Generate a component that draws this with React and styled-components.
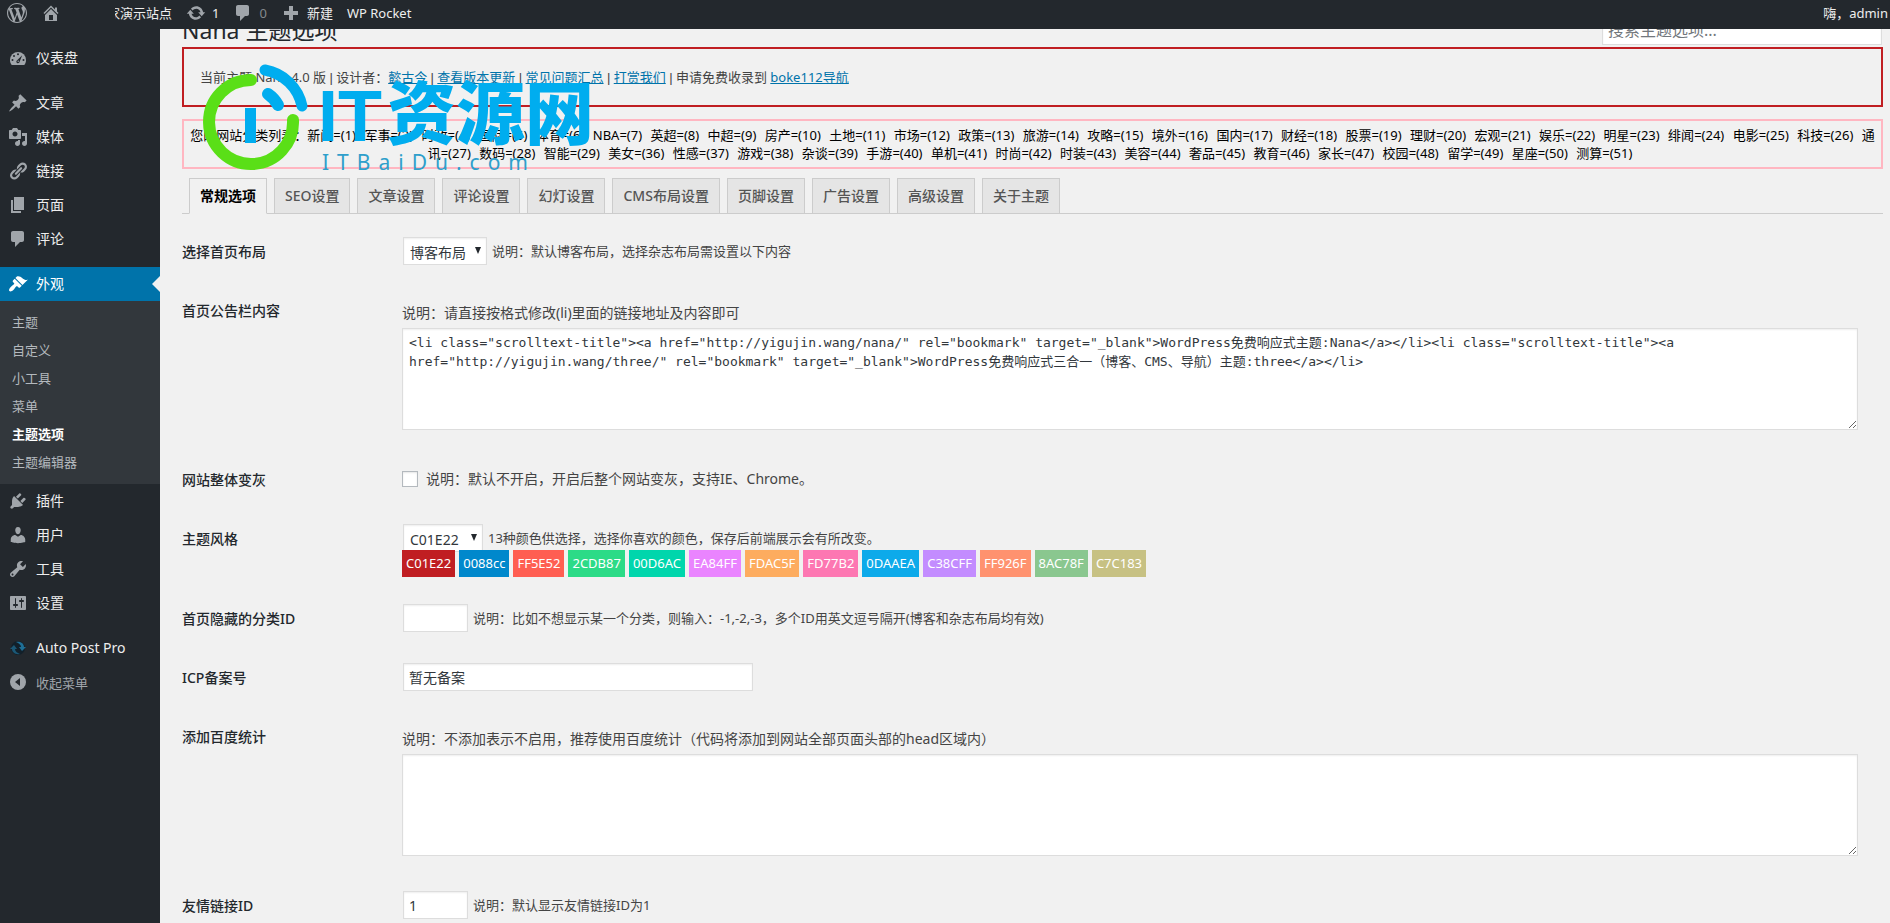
import React from "react";
import styled, { createGlobalStyle } from "styled-components";

const GlobalStyle = createGlobalStyle`
  * {
    box-sizing: border-box;
  }
  body {
    margin: 0;
    background: #f1f1f1;
    color: #444;
    font-family: "Noto Sans", "Noto Sans CJK SC", sans-serif;
    font-size: 13px;
    line-height: 18px;
  }
  input, select, textarea, button {
    font-family: inherit;
    margin: 0;
  }
`;

const Page = styled.div`
  position: relative;
  height: 100vh;
  overflow: hidden;
`;

/* ---------- admin bar ---------- */

const AdminBar = styled.header`
  position: absolute;
  top: 0;
  left: 0;
  right: 0;
  z-index: 10;
  display: flex;
  align-items: center;
  height: 29px;
  padding: 0 2px 4px 7px;
  background: #23282d;
`;

const BarLink = styled.a`
  display: flex;
  align-items: center;
  gap: 6px;
  margin-right: ${(props) => props.$gap || 14}px;
  color: ${(props) => (props.$dim ? "#84888c" : "#eee")};
  text-decoration: none;
  white-space: nowrap;
`;

const SiteName = styled(BarLink)`
  justify-content: flex-end;
  width: 57px;
  overflow: hidden;
`;

const Account = styled(BarLink)`
  margin-left: auto;
  margin-right: 0;
`;

/* ---------- side menu ---------- */

const Layout = styled.div`
  display: flex;
  min-height: 100vh;
`;

const Sidebar = styled.nav`
  flex: none;
  width: 160px;
  padding-top: 41px;
  background: #23282d;
`;

const MenuGroup = styled.div`
  margin-bottom: 11px;
`;

const MenuLink = styled.a`
  position: relative;
  display: flex;
  align-items: center;
  height: 34px;
  padding-left: 8px;
  gap: 8px;
  font-size: 14px;
  color: ${(props) => (props.$active ? "#fff" : "#eee")};
  background: ${(props) => (props.$active ? "#0073aa" : "transparent")};
  text-decoration: none;

  &::after {
    content: "";
    display: ${(props) => (props.$active ? "block" : "none")};
    position: absolute;
    right: 0;
    top: 9px;
    border: 8px solid transparent;
    border-left-width: 0;
    border-right-color: #f1f1f1;
  }
`;

const CollapseButton = styled.button`
  display: flex;
  align-items: center;
  gap: 8px;
  width: 100%;
  height: 34px;
  padding: 0 0 0 8px;
  border: 0;
  background: none;
  color: #a0a5aa;
  font-size: 13px;
`;

const SubMenu = styled.div`
  padding: 7px 0 8px;
  background: #32373c;
`;

const SubLink = styled.a`
  display: block;
  padding: 5px 12px;
  color: ${(props) => (props.$current ? "#fff" : "#b4b9be")};
  font-weight: ${(props) => (props.$current ? 600 : 400)};
  text-decoration: none;
`;

const Icon = styled.svg`
  flex: none;
  width: 20px;
  height: 20px;
  fill: ${(props) => (props.$active ? "#fff" : "#a0a5aa")};
`;

/* ---------- content ---------- */

const Main = styled.main`
  flex: 1;
  min-width: 0;
  padding: 15px 7px 0 22px;
`;

const TitleRow = styled.div`
  display: flex;
  justify-content: space-between;
  height: 32px;
`;

const Title = styled.h1`
  margin: 0;
  color: #23282d;
  font-size: 23px;
  font-weight: 400;
  line-height: 30px;
`;

const fieldBox = `
  border: 1px solid #ddd;
  background: #fff;
  color: #32373c;
  box-shadow: inset 0 1px 2px rgba(0, 0, 0, 0.07);
  outline: none;
`;

const SearchInput = styled.input`
  ${fieldBox}
  width: 280px;
  height: 30px;
  margin-right: 1px;
  padding: 3px 5px;
  font-size: 16px;

  &::placeholder {
    color: #72777c;
  }
`;

const ThemeInfo = styled.div`
  padding: 19px 16px 18px;
  border: 2px solid #c01e22;

  a {
    color: #0073aa;
  }
`;

const Divider = styled.span`
  font-family: "Liberation Sans", sans-serif;
`;

const CategoryList = styled.div`
  margin: 12px 0 9px;
  padding: 5px 4px;
  border: 2px solid #ffb6c1;
  color: #000;
  text-align: center;
`;

const Category = styled.span`
  margin-right: 5px;
`;

const Tabs = styled.div`
  display: flex;
  gap: 7px;
  padding-left: 7px;
  border-bottom: 1px solid #ccc;
`;

const Tab = styled.button`
  height: 36px;
  margin-bottom: -1px;
  padding: 0 10px;
  border: 1px solid #ccc;
  border-bottom-color: ${(props) => (props.$active ? "#f1f1f1" : "#ccc")};
  background: ${(props) => (props.$active ? "#f1f1f1" : "#e5e5e5")};
  color: ${(props) => (props.$active ? "#000" : "#555")};
  font-size: 14px;
  font-weight: ${(props) => (props.$active ? 600 : 500)};
  line-height: 24px;
`;

const Form = styled.form`
  padding-top: 9px;
`;

const Row = styled.div`
  display: grid;
  grid-template-columns: 220px 1fr;
`;

const RowLabel = styled.label`
  padding-top: 20px;
  color: #23282d;
  font-size: 14px;
  font-weight: 500;
`;

const Field = styled.div`
  padding: 14px 10px 17px 0;
`;

const Line = styled.div`
  display: flex;
  align-items: center;
  gap: 5px;
  min-height: 28px;
  padding-left: ${(props) => (props.$flush ? 0 : 1)}px;
`;

const CheckLabel = styled.label`
  padding-left: 3px;
  font-size: 14px;
`;

const Description = styled.p`
  margin: 0;
  padding: 7px 0 5px;
  font-size: 14px;
  line-height: 20px;
`;

const TextInput = styled.input`
  ${fieldBox}
  width: ${(props) => (props.$wide ? 350 : 65)}px;
  height: 28px;
  padding: 3px 5px;
  font-size: 14px;
`;

const TextArea = styled.textarea`
  ${fieldBox}
  display: block;
  width: 99%;
  height: 102px;
  margin-bottom: 4px;
  padding: 4px 6px;
  font-family: "DejaVu Sans Mono", "Noto Sans CJK SC", monospace;
  font-size: 13px;
  line-height: 19px;
`;

const Checkbox = styled.input`
  appearance: none;
  width: 16px;
  height: 16px;
  border: 1px solid #b4b9be;
  background: #fff;
  box-shadow: inset 0 1px 2px rgba(0, 0, 0, 0.1);
`;

const SelectWrap = styled.span`
  position: relative;
  display: inline-flex;
  width: ${(props) => (props.$small ? 80 : 84)}px;
`;

const Select = styled.select`
  ${fieldBox}
  appearance: none;
  width: 100%;
  height: 28px;
  padding: 3px 18px 1px 6px;
  font-size: 14px;
`;

const Arrow = styled.svg`
  position: absolute;
  right: 6px;
  top: 10px;
  width: 6px;
  height: 7px;
  fill: #23282d;
  pointer-events: none;
`;

const Swatches = styled.div`
  position: relative;
  display: flex;
  flex-wrap: wrap;
  gap: 4px;
  margin: -2px 0 -4px;
`;

const Swatch = styled.span`
  padding: 4px 4px 5px;
  background: ${(props) => props.$color};
  color: #fff;
`;

const Watermark = styled.svg`
  position: absolute;
  left: 200px;
  top: 60px;
  z-index: 5;
  width: 400px;
  height: 116px;
  pointer-events: none;
`;

const paths = {
  wordpress:
    "M20 10c0-5.51-4.49-10-10-10C4.48 0 0 4.49 0 10c0 5.52 4.48 10 10 10 5.51 0 10-4.48 10-10zM7.78 15.37L4.37 6.22c.55-.02 1.17-.08 1.17-.08.5-.06.44-1.13-.06-1.11 0 0-1.45.11-2.37.11-.18 0-.37 0-.58-.01C4.12 2.69 6.87 1.11 10 1.11c2.33 0 4.45.87 6.05 2.34-.68-.11-1.65.39-1.65 1.58 0 .74.45 1.36.9 2.1.35.61.55 1.36.55 2.46 0 1.49-1.4 5-1.4 5l-3.03-8.37c.54-.02.82-.17.82-.17.5-.05.44-1.25-.06-1.22 0 0-1.44.12-2.38.12-.87 0-2.33-.12-2.33-.12-.5-.03-.56 1.2-.06 1.22l.92.08 1.26 3.41zM17.41 10c.24-.64.74-1.87.43-4.25.7 1.29 1.05 2.71 1.05 4.25 0 3.29-1.73 6.24-4.4 7.78.97-2.59 1.94-5.2 2.92-7.78zM6.1 18.09C3.12 16.65 1.11 13.53 1.11 10c0-1.3.23-2.48.72-3.59C3.25 10.3 4.67 14.2 6.1 18.09zm4.03-6.63l2.58 6.98c-.86.29-1.76.45-2.71.45-.79 0-1.57-.11-2.29-.33.81-2.38 1.62-4.74 2.42-7.1z",
  home:
    "M16 8.5l1.53 1.53-1.06 1.06L10 4.6l-6.47 6.49-1.06-1.06L10 2.5l4 4v-2h2v4zm-6-2.46l6 5.99V18H4v-5.97zM12 17v-5H8v5h4z",
  update:
    "M10.2 3.28c3.53 0 6.43 2.61 6.92 6h2.08l-3.5 4-3.5-4h2.32c-.45-1.97-2.21-3.45-4.32-3.45-1.45 0-2.73.71-3.54 1.78L4.95 5.66C6.23 4.2 8.11 3.28 10.2 3.28zm-.4 13.44c-3.52 0-6.43-2.61-6.92-6H.8l3.5-4c1.17 1.33 2.33 2.67 3.5 4H5.48c.45 1.97 2.21 3.45 4.32 3.45 1.45 0 2.73-.71 3.54-1.78l1.71 1.95c-1.28 1.46-3.15 2.38-5.25 2.38z",
  comments:
    "M5 2h9c1.1 0 2 .9 2 2v7c0 1.1-.9 2-2 2h-2l-5 5v-5H5c-1.1 0-2-.9-2-2V4c0-1.1.9-2 2-2z",
  plus: "M17 8v4h-5v5H8v-5H3V8h5V3h4v5h5z",
  post:
    "M10.44 3.02l1.82-1.82 6.36 6.35-1.83 1.82c-1.05-.68-2.48-.57-3.41.36l-.75.75c-.92.93-1.04 2.35-.35 3.41l-1.83 1.82-2.41-2.41-2.8 2.79c-.42.42-3.38 2.71-3.8 2.29s1.86-3.39 2.28-3.81l2.79-2.79L4.1 9.36l1.83-1.82c1.05.69 2.48.57 3.4-.36l.75-.75c.93-.92 1.05-2.35.36-3.41z",
  media:
    "M13 11V4c0-.55-.45-1-1-1h-1.67L9 1H5L3.67 3H2c-.55 0-1 .45-1 1v7c0 .55.45 1 1 1h10c.55 0 1-.45 1-1zM7 4.5c1.38 0 2.5 1.12 2.5 2.5S8.38 9.5 7 9.5 4.5 8.38 4.5 7 5.62 4.5 7 4.5zM14 6h5v10.5c0 1.38-1.12 2.5-2.5 2.5S14 17.88 14 16.5s1.12-2.5 2.5-2.5c.17 0 .34.02.5.05V9h-3V6zm-4 8.05V13h2v3.5c0 1.38-1.12 2.5-2.5 2.5S7 17.88 7 16.5 8.12 14 9.5 14c.17 0 .34.02.5.05z",
  links:
    "M17.74 2.76c1.68 1.69 1.68 4.41 0 6.1l-1.53 1.52c-1.12 1.12-2.7 1.47-4.14 1.09l2.62-2.61.76-.77.76-.76c.84-.84.84-2.2 0-3.04-.84-.85-2.2-.85-3.04 0l-.77.76-3.38 3.38c-.37-1.44-.02-3.02 1.1-4.14l1.52-1.53c1.69-1.68 4.42-1.68 6.1 0zM8.59 13.43l5.34-5.34c.42-.42.42-1.1 0-1.52-.44-.43-1.13-.39-1.53 0l-5.33 5.34c-.42.42-.42 1.1 0 1.52.44.43 1.13.39 1.52 0zm-.76 2.29l4.14-4.15c.38 1.44.03 3.02-1.09 4.14l-1.52 1.53c-1.69 1.68-4.41 1.68-6.1 0-1.68-1.68-1.68-4.42 0-6.1l1.53-1.52c1.12-1.12 2.7-1.47 4.14-1.1l-4.14 4.15c-.85.84-.85 2.2 0 3.05.84.84 2.2.84 3.04 0z",
  page: "M6 15V2h10v13H6zm-1 1h8v2H3V5h2v11z",
  appearance:
    "M14.48 11.06L7.41 3.99l1.5-1.5c.5-.56 2.3-.47 3.51.32 1.21.8 1.43 1.28 2.91 2.1 1.18.64 2.45 1.26 4.45.85zm-.71.71L6.7 4.7 4.93 6.47c-.39.39-.39 1.02 0 1.41l1.06 1.06c.39.39.39 1.03 0 1.42-.6.6-1.43 1.11-2.21 1.69-.35.26-.7.53-1.01.84C1.43 14.23.4 16.08 1.4 17.07c.99 1 2.84-.03 4.18-1.36.31-.31.58-.66.85-1.02.57-.78 1.08-1.61 1.69-2.21.39-.39 1.02-.39 1.41 0l1.06 1.06c.39.39 1.02.39 1.41 0z",
  plugins:
    "M13.11 4.36L9.87 7.6 8 5.73l3.24-3.24c.35-.34 1.05-.2 1.56.32.52.51.66 1.21.31 1.55zm-8 1.77l.91-1.12 9.01 9.01-1.19.84c-.71.71-2.63 1.16-3.82 1.16H6.14L4.9 17.26c-.59.59-1.54.59-2.12 0-.59-.58-.59-1.53 0-2.12l1.24-1.24v-3.88c0-1.13.4-3.19 1.09-3.89zm7.26 3.97l3.24-3.24c.34-.35 1.04-.21 1.55.31.52.51.66 1.21.31 1.55l-3.24 3.25z",
  users:
    "M10 9.25c-2.27 0-2.73-3.44-2.73-3.44C7 4.02 7.82 2 9.97 2c2.16 0 2.98 2.02 2.71 3.81 0 0-.41 3.44-2.68 3.44zm0 2.57L12.72 10c2.39 0 4.52 2.33 4.52 4.53v2.49s-3.65 1.13-7.24 1.13c-3.65 0-7.24-1.13-7.24-1.13v-2.49c0-2.25 1.94-4.48 4.47-4.48z",
  tools:
    "M16.68 9.77c-1.34 1.34-3.3 1.67-4.95.99l-5.41 6.52c-.99.99-2.59.99-3.58 0s-.99-2.59 0-3.57l6.52-5.42c-.68-1.65-.35-3.61.99-4.95 1.28-1.28 3.12-1.62 4.72-1.06l-2.89 2.89 2.82 2.82 2.86-2.87c.53 1.58.18 3.39-1.08 4.65zM3.81 16.21c.4.39 1.04.39 1.43 0 .4-.4.4-1.04 0-1.43-.39-.4-1.03-.4-1.43 0-.39.39-.39 1.03 0 1.43z",
  settings:
    "M18 16V4c0-.55-.45-1-1-1H3c-.55 0-1 .45-1 1v12c0 .55.45 1 1 1h14c.55 0 1-.45 1-1zM8 11h1c.55 0 1 .45 1 1s-.45 1-1 1H8v1.5c0 .28-.22.5-.5.5s-.5-.22-.5-.5V13H6c-.55 0-1-.45-1-1s.45-1 1-1h1V5.5c0-.28.22-.5.5-.5s.5.22.5.5V11zm5-2h-1c-.55 0-1-.45-1-1s.45-1 1-1h1V5.5c0-.28.22-.5.5-.5s.5.22.5.5V7h1c.55 0 1 .45 1 1s-.45 1-1 1h-1v5.5c0 .28-.22.5-.5.5s-.5-.22-.5-.5V9z",
};

const WpIcon = ({ name, active }) => (
  <Icon viewBox="0 0 20 20" $active={active} aria-hidden="true">
    <path fillRule="evenodd" d={paths[name]} />
  </Icon>
);

const DashboardIcon = () => (
  <Icon viewBox="0 0 20 20" aria-hidden="true">
    <path d="M3.76 17h12.48C17.34 15.63 18 13.89 18 12a8 8 0 0 0-16 0c0 1.89.66 3.63 1.76 5z" />
    <g fill="#23282d">
      <circle cx="10" cy="6.2" r="1" />
      <circle cx="6" cy="8" r="1" />
      <circle cx="4.5" cy="12" r="1" />
      <circle cx="15.5" cy="12" r="1" />
      <path d="M14.2 7.2l-2.7 6.7a1.6 1.6 0 1 1-2.6-1.5z" />
    </g>
    <circle cx="10.2" cy="13.2" r="0.7" />
  </Icon>
);

const AutoPostIcon = () => (
  <Icon viewBox="0 0 20 20" aria-hidden="true">
    <circle cx="10" cy="10" r="7" fill="#12202a" />
    <path d="M2 11l4-4 3 4H7c0 2 2 4 5 5-5 1-8-2-8-5z" fill="#1b5876" />
    <path d="M18 9l-4 4-3-4h2c0-2-2-4-5-5 5-1 8 2 8 5z" fill="#1f6f96" />
  </Icon>
);

const CollapseIcon = () => (
  <Icon viewBox="0 0 20 20" aria-hidden="true">
    <circle cx="10" cy="10" r="8" />
    <path d="M12 6v8l-5-4z" fill="#23282d" />
  </Icon>
);

const menuTop = [
  ["post", "文章"],
  ["media", "媒体"],
  ["links", "链接"],
  ["page", "页面"],
  ["comments", "评论"],
];

const subMenu = ["主题", "自定义", "小工具", "菜单", "主题选项", "主题编辑器"];

const menuBottom = [
  ["plugins", "插件"],
  ["users", "用户"],
  ["tools", "工具"],
  ["settings", "设置"],
];

const infoLinks = ["懿古今", "查看版本更新", "常见问题汇总", "打赏我们"];

const categories = [
  ["新闻", 1], ["军事", 3], ["时政", 4], ["国际", 5], ["体育", 6], ["NBA", 7],
  ["英超", 8], ["中超", 9], ["房产", 10], ["土地", 11], ["市场", 12], ["政策", 13],
  ["旅游", 14], ["攻略", 15], ["境外", 16], ["国内", 17], ["财经", 18], ["股票", 19],
  ["理财", 20], ["宏观", 21], ["娱乐", 22], ["明星", 23], ["绯闻", 24], ["电影", 25],
  ["科技", 26], ["通讯", 27], ["数码", 28], ["智能", 29], ["美女", 36], ["性感", 37],
  ["游戏", 38], ["杂谈", 39], ["手游", 40], ["单机", 41], ["时尚", 42], ["时装", 43],
  ["美容", 44], ["奢品", 45], ["教育", 46], ["家长", 47], ["校园", 48], ["留学", 49],
  ["星座", 50], ["测算", 51],
];

const tabs = [
  "常规选项", "SEO设置", "文章设置", "评论设置", "幻灯设置",
  "CMS布局设置", "页脚设置", "广告设置", "高级设置", "关于主题",
];

const colors = [
  "C01E22", "0088cc", "FF5E52", "2CDB87", "00D6AC", "EA84FF", "FDAC5F",
  "FD77B2", "0DAAEA", "C38CFF", "FF926F", "8AC78F", "C7C183",
];

const notice =
  '<li class="scrolltext-title"><a href="http://yigujin.wang/nana/" rel="bookmark" target="_blank">WordPress免费响应式主题:Nana</a></li><li class="scrolltext-title"><a href="http://yigujin.wang/three/" rel="bookmark" target="_blank">WordPress免费响应式三合一（博客、CMS、导航）主题:three</a></li>';

const MenuItem = ({ icon, label, active }) => (
  <MenuLink href="#" $active={active}>
    {typeof icon === "string" ? <WpIcon name={icon} active={active} /> : icon}
    {label}
  </MenuLink>
);

const Dropdown = ({ id, small, options }) => (
  <SelectWrap $small={small}>
    <Select id={id}>
      {options.map((option) => (
        <option key={option}>{option}</option>
      ))}
    </Select>
    <Arrow viewBox="0 0 6 7" aria-hidden="true">
      <path d="M0 0h6L3 7z" />
    </Arrow>
  </SelectWrap>
);

const OptionRow = ({ id, label, children }) => (
  <Row>
    <RowLabel htmlFor={id}>{label}</RowLabel>
    <Field>{children}</Field>
  </Row>
);

const SiteWatermark = () => (
  <Watermark viewBox="0 0 400 116">
    <g fill="none" strokeLinecap="round">
      <path d="M51 20A42 42 0 1 0 93 60" stroke="#5adf17" strokeWidth="12" />
      <path d="M65 10A46 46 0 0 1 102 46" stroke="#00adef" strokeWidth="11" />
      <path d="M68 34Q74 38 78 45" stroke="#00adef" strokeWidth="12" />
    </g>
    <path d="M45 48h11v35H45z" fill="#00adef" />
    <g fill="#00adef" fontWeight="900">
      <text x="118" y="81" fontSize="72" fontFamily="'Liberation Sans', sans-serif">
        IT
      </text>
      <text x="187" y="79" fontSize="69" fontFamily="'Noto Sans CJK SC', sans-serif">
        资源网
      </text>
    </g>
    <text
      x="122"
      y="110"
      fill="#2f9fcb"
      fontFamily="'Noto Sans', sans-serif"
      fontSize="21"
      letterSpacing="8"
    >
      ITBaiDu.com
    </text>
  </Watermark>
);

export default function App() {
  return (
    <>
      <GlobalStyle />
      <Page>
        <AdminBar>
          <BarLink href="#" aria-label="WordPress">
            <WpIcon name="wordpress" />
          </BarLink>
          <BarLink href="#" aria-label="首页" $gap={54}>
            <WpIcon name="home" />
          </BarLink>
          <SiteName href="#">家演示站点</SiteName>
          <BarLink href="#">
            <WpIcon name="update" />1
          </BarLink>
          <BarLink href="#" $dim>
            <WpIcon name="comments" />0
          </BarLink>
          <BarLink href="#">
            <WpIcon name="plus" />
            新建
          </BarLink>
          <BarLink href="#">WP Rocket</BarLink>
          <Account href="#">嗨，admin</Account>
        </AdminBar>

        <Layout>
          <Sidebar>
            <MenuGroup>
              <MenuItem icon={<DashboardIcon />} label="仪表盘" />
            </MenuGroup>
            <MenuGroup>
              {menuTop.map(([icon, label]) => (
                <MenuItem key={label} icon={icon} label={label} />
              ))}
            </MenuGroup>
            <MenuGroup>
              <MenuItem icon="appearance" label="外观" active />
              <SubMenu>
                {subMenu.map((label) => (
                  <SubLink key={label} href="#" $current={label === "主题选项"}>
                    {label}
                  </SubLink>
                ))}
              </SubMenu>
              {menuBottom.map(([icon, label]) => (
                <MenuItem key={label} icon={icon} label={label} />
              ))}
            </MenuGroup>
            <MenuItem icon={<AutoPostIcon />} label="Auto Post Pro" />
            <CollapseButton type="button">
              <CollapseIcon />
              收起菜单
            </CollapseButton>
          </Sidebar>

          <Main>
            <TitleRow>
              <Title>Nana 主题选项</Title>
              <SearchInput type="search" placeholder="搜索主题选项..." aria-label="搜索主题选项" />
            </TitleRow>

            <ThemeInfo>
              当前主题 Nana 4.0 版 <Divider>|</Divider> 设计者：
              {infoLinks.map((label) => (
                <React.Fragment key={label}>
                  <a href="#">{label}</a> <Divider>|</Divider>{" "}
                </React.Fragment>
              ))}
              申请免费收录到 <a href="#">boke112导航</a>
            </ThemeInfo>

            <CategoryList>
              您的网站分类列表：
              {categories.map(([name, id]) => (
                <React.Fragment key={id}>
                  <Category>
                    {name}=({id})
                  </Category>{" "}
                </React.Fragment>
              ))}
            </CategoryList>

            <Tabs>
              {tabs.map((label, i) => (
                <Tab key={label} type="button" $active={i === 0}>
                  {label}
                </Tab>
              ))}
            </Tabs>

            <Form>
              <OptionRow id="layout" label="选择首页布局">
                <Line>
                  <Dropdown id="layout" options={["博客布局", "杂志布局"]} />
                  <span>说明：默认博客布局，选择杂志布局需设置以下内容</span>
                </Line>
              </OptionRow>
              <OptionRow id="notice" label="首页公告栏内容">
                <Description>说明：请直接按格式修改(li)里面的链接地址及内容即可</Description>
                <TextArea id="notice" defaultValue={notice} spellCheck={false} />
              </OptionRow>
              <OptionRow id="gray" label="网站整体变灰">
                <Line $flush>
                  <Checkbox id="gray" type="checkbox" />
                  <CheckLabel htmlFor="gray">
                    说明：默认不开启，开启后整个网站变灰，支持IE、Chrome。
                  </CheckLabel>
                </Line>
              </OptionRow>
              <OptionRow id="color" label="主题风格">
                <Line>
                  <Dropdown id="color" small options={colors} />
                  <span>13种颜色供选择，选择你喜欢的颜色，保存后前端展示会有所改变。</span>
                </Line>
                <Swatches>
                  {colors.map((color) => (
                    <Swatch key={color} $color={"#" + color}>
                      {color}
                    </Swatch>
                  ))}
                </Swatches>
              </OptionRow>
              <OptionRow id="hidden-cats" label="首页隐藏的分类ID">
                <Line>
                  <TextInput id="hidden-cats" type="text" />
                  <span>说明：比如不想显示某一个分类，则输入：-1,-2,-3，多个ID用英文逗号隔开(博客和杂志布局均有效)</span>
                </Line>
              </OptionRow>
              <OptionRow id="icp" label="ICP备案号">
                <Line>
                  <TextInput id="icp" type="text" $wide defaultValue="暂无备案" />
                </Line>
              </OptionRow>
              <OptionRow id="stats" label="添加百度统计">
                <Description>
                  说明：不添加表示不启用，推荐使用百度统计（代码将添加到网站全部页面头部的head区域内）
                </Description>
                <TextArea id="stats" />
              </OptionRow>
              <OptionRow id="link-id" label="友情链接ID">
                <Line>
                  <TextInput id="link-id" type="text" defaultValue="1" />
                  <span>说明：默认显示友情链接ID为1</span>
                </Line>
              </OptionRow>
            </Form>
          </Main>
        </Layout>
        <SiteWatermark />
      </Page>
    </>
  );
}
